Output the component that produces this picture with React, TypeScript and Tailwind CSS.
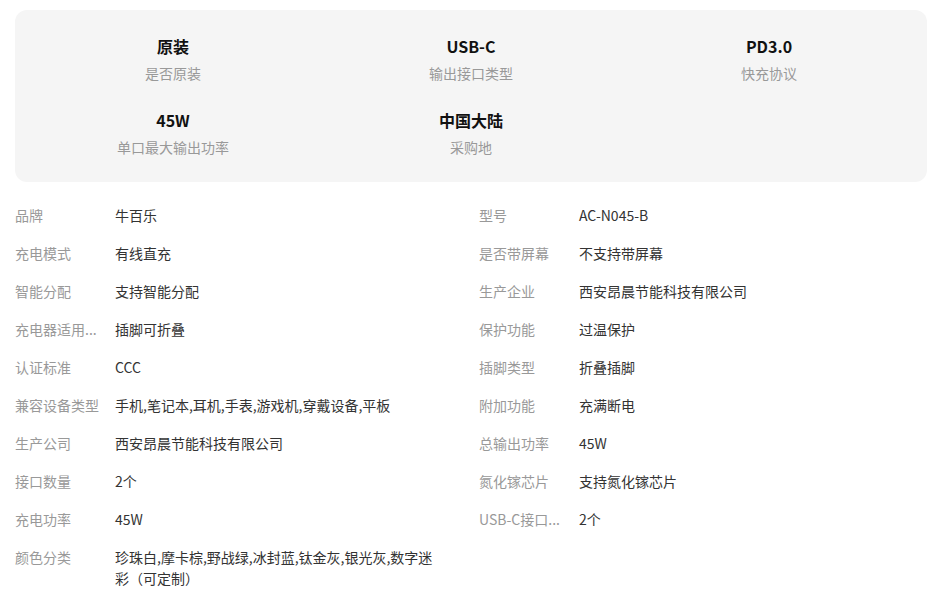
const highlights = [
  { value: '原装', label: '是否原装' },
  { value: 'USB-C', label: '输出接口类型' },
  { value: 'PD3.0', label: '快充协议' },
  { value: '45W', label: '单口最大输出功率' },
  { value: '中国大陆', label: '采购地' },
];

const specs: [string, string][] = [
  ['品牌', '牛百乐'],
  ['型号', 'AC-N045-B'],
  ['充电模式', '有线直充'],
  ['是否带屏幕', '不支持带屏幕'],
  ['智能分配', '支持智能分配'],
  ['生产企业', '西安昂晨节能科技有限公司'],
  ['充电器适用...', '插脚可折叠'],
  ['保护功能', '过温保护'],
  ['认证标准', 'CCC'],
  ['插脚类型', '折叠插脚'],
  ['兼容设备类型', '手机,笔记本,耳机,手表,游戏机,穿戴设备,平板'],
  ['附加功能', '充满断电'],
  ['生产公司', '西安昂晨节能科技有限公司'],
  ['总输出功率', '45W'],
  ['接口数量', '2个'],
  ['氮化镓芯片', '支持氮化镓芯片'],
  ['充电功率', '45W'],
  ['USB-C接口...', '2个'],
  ['颜色分类', '珍珠白,摩卡棕,野战绿,冰封蓝,钛金灰,银光灰,数字迷彩（可定制）'],
];

export default function App() {
  return (
    <div
      className="w-[946px] h-[610px] bg-white pt-[10px] px-[15px] overflow-hidden"
      style={{ fontFamily: '"Noto Sans CJK SC", "Noto Sans", sans-serif' }}
    >
      <div className="w-[912px] rounded-xl bg-[#f5f5f5] px-[9px] pt-[24px] pb-[25px] grid grid-cols-3 gap-y-[25px]">
        {highlights.map((h) => (
          <div key={h.label} className="flex flex-col items-center">
            <div className="text-[16px] leading-[24px] font-bold text-[#111]">{h.value}</div>
            <div className="mt-[5px] text-[14px] leading-[20px] text-[#999]">{h.label}</div>
          </div>
        ))}
      </div>
      <div className="mt-[14px] grid grid-cols-[464px_1fr]">
        {specs.map(([k, v]) => (
          <div key={k} className="flex pt-[9px] pb-[8px] text-[14px] leading-[21px]">
            <div className="w-[100px] shrink-0 text-[#999]">{k}</div>
            <div className="max-w-[324px] text-[#333]">{v}</div>
          </div>
        ))}
      </div>
    </div>
  );
}
